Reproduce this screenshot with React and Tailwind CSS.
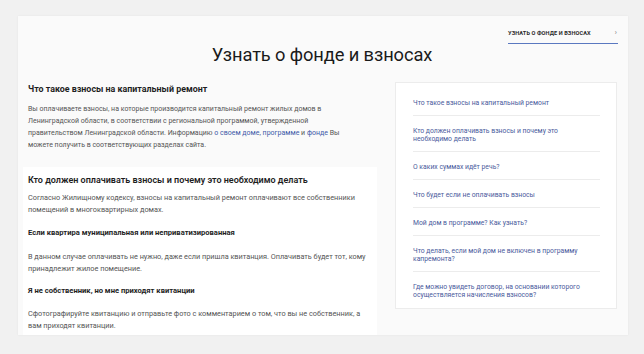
const sideLinks = [
  ["Что такое взносы на капитальный ремонт"],
  ["Кто должен оплачивать взносы и почему это", "необходимо делать"],
  ["О каких суммах идёт речь?"],
  ["Что будет если не оплачивать взносы"],
  ["Мой дом в программе? Как узнать?"],
  ["Что делать, если мой дом не включен в программу", "капремонта?"],
  ["Где можно увидеть договор, на основании которого", "осуществляется начисления взносов?"],
];

function Para({ lines, className = "" }) {
  return (
    <p className={`text-[7.3px] leading-[12px] text-[#555] whitespace-nowrap ${className}`}>
      {lines.map((l, i) => (
        <span key={i} className="block">{l}</span>
      ))}
    </p>
  );
}

function SubTitle({ children, className = "" }) {
  return <h4 className={`text-[7.6px] leading-[12px] font-bold text-[#1e1e1e] ${className}`}>{children}</h4>;
}

export default function App() {
  return (
    <div
      className="w-[644px] h-[354px] bg-[#f1f1f1] pt-[16px] pl-[18px] overflow-hidden"
      style={{ fontFamily: "Roboto, 'Liberation Sans', sans-serif" }}
    >
      <div className="w-[610px] h-[319px] bg-[#fafafa] shadow-[0_0_2px_rgba(0,0,0,0.06)] pt-[12px] overflow-hidden flex flex-col">
        {/* header */}
        <div className="flex justify-end pr-[10px]">
          <a className="w-[110px] flex items-center justify-between pt-[1px] pb-[6px] border-b-[1.5px] border-[#5a78c0] text-[5.6px] leading-[8px] font-bold tracking-[0.1px] text-[#2a2a2a]">
            <span>УЗНАТЬ О ФОНДЕ И ВЗНОСАХ</span>
            <span className="text-[#777] font-normal text-[7px] pr-[1px]">›</span>
          </a>
        </div>
        <h1 className="text-center text-[18.3px] leading-[24px] text-[#1a1a1a] tracking-[-0.1px] mt-[-1px] pr-[2px]">
          Узнать о фонде и взносах
        </h1>

        {/* content */}
        <div className="flex flex-1 mt-[14px] pl-[5px] pr-[11px] gap-[18px]">
          <div className="w-[354px] flex flex-col">
            <section className="pl-[5px] pt-[2px] pb-[16px]">
              <h3 className="text-[8.9px] leading-[12px] font-bold text-[#1e1e1e]">
                Что такое взносы на капитальный ремонт
              </h3>
              <p className="mt-[8px] text-[7px] leading-[12px] text-[#555] whitespace-nowrap">
                <span className="block">Вы оплачиваете взносы, на которые производится капитальный ремонт жилых домов в</span>
                <span className="block">Ленинградской области, в соответствии с региональной программой, утвержденной</span>
                <span className="block">
                  правительством Ленинградской области. Информацию <a className="text-[#3e5aa8]">о своем доме</a>,{" "}
                  <a className="text-[#3e5aa8]">программе</a> и <a className="text-[#3e5aa8]">фонде</a> Вы
                </span>
                <span className="block">можете получить в соответствующих разделах сайта.</span>
              </p>
            </section>
            <section className="flex-1 bg-white pl-[5px] pt-[7px]">
              <h3 className="text-[9px] leading-[12px] font-semibold text-[#1e1e1e]">
                Кто должен оплачивать взносы и почему это необходимо делать
              </h3>
              <Para
                className="mt-[6px]"
                lines={[
                  "Согласно Жилищному кодексу, взносы на капитальный ремонт оплачивают все собственники",
                  "помещений в многоквартирных домах.",
                ]}
              />
              <SubTitle className="mt-[11px]">Если квартира муниципальная или неприватизированная</SubTitle>
              <Para
                className="mt-[12px]"
                lines={[
                  "В данном случае оплачивать не нужно, даже если пришла квитанция. Оплачивать будет тот, кому",
                  "принадлежит жилое помещение.",
                ]}
              />
              <SubTitle className="mt-[10px]">Я не собственник, но мне приходят квитанции</SubTitle>
              <Para
                className="mt-[11px]"
                lines={[
                  "Сфотографируйте квитанцию и отправьте фото с комментарием о том, что вы не собственник, а",
                  "вам приходят квитанции.",
                ]}
              />
            </section>
          </div>

          {/* sidebar */}
          <aside className="w-[222px] self-start mt-[1px] bg-white border border-[#ececec] pt-[5px] pb-[9px] pl-[17px] pr-[16px]">
            {sideLinks.map((lines, i) => (
              <a
                key={i}
                className={`block pt-[11px] text-[6.8px] leading-[8px] text-[#4a5a9c] whitespace-nowrap ${
                  i < sideLinks.length - 1 ? "pb-[8px] border-b border-[#ececec]" : "pb-0"
                }`}
              >
                {lines.map((l, j) => (
                  <span key={j} className="block">{l}</span>
                ))}
              </a>
            ))}
          </aside>
        </div>
      </div>
    </div>
  );
}
